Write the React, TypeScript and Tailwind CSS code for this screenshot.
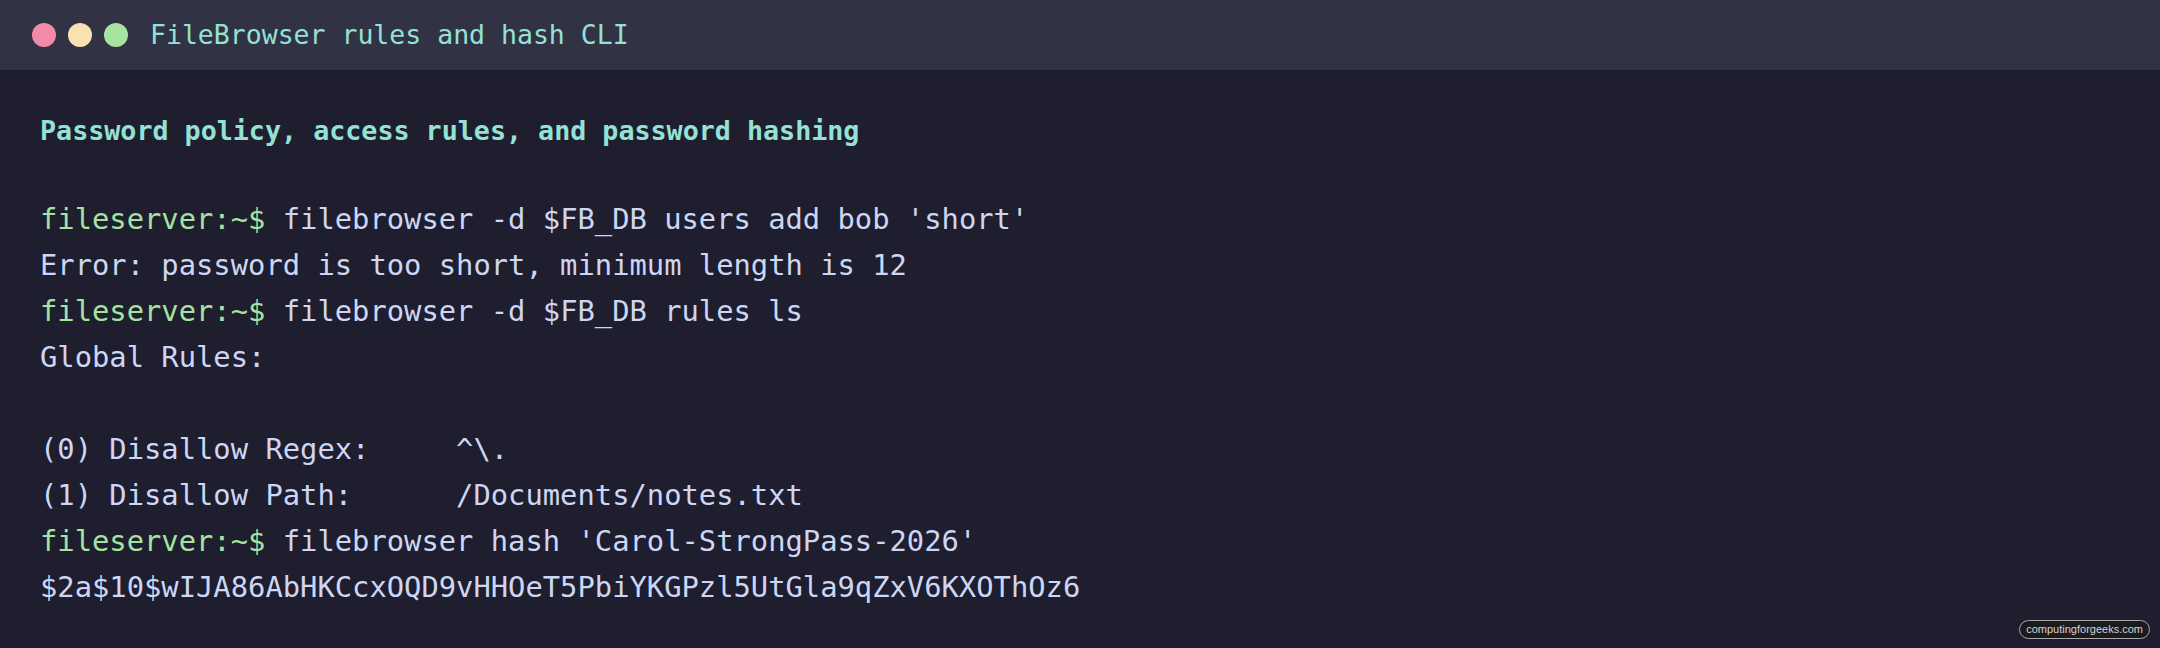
const mono = "font-['DejaVu_Sans_Mono','Liberation_Mono',monospace]"

interface LineType {
    prompt?: boolean
    text: string
}

const lines: LineType[] = [
    { prompt: true, text: "filebrowser -d $FB_DB users add bob 'short'" },
    { text: "Error: password is too short, minimum length is 12" },
    { prompt: true, text: "filebrowser -d $FB_DB rules ls" },
    { text: "Global Rules:" },
    { text: "" },
    { text: "(0) Disallow Regex:     ^\\." },
    { text: "(1) Disallow Path:      /Documents/notes.txt" },
    { prompt: true, text: "filebrowser hash 'Carol-StrongPass-2026'" },
    { text: "$2a$10$wIJA86AbHKCcxOQD9vHHOeT5PbiYKGPzl5UtGla9qZxV6KXOThOz6" },
]

export default function App() {
    return (
        <div className={`relative w-[2160px] h-[648px] bg-[#1e1e2e] overflow-hidden ${mono}`}>

            <header className="h-[70px] bg-[#313244] flex items-center pl-[32px]">
                <div className="flex gap-[12px]">
                    <span className="w-[24px] h-[24px] rounded-full bg-[#f38ba8]" />
                    <span className="w-[24px] h-[24px] rounded-full bg-[#f9e2af]" />
                    <span className="w-[24px] h-[24px] rounded-full bg-[#a6e3a1]" />
                </div>
                <h1 className="ml-[22px] text-[26.5px] leading-none text-[#94e2d5]">FileBrowser rules and hash CLI</h1>
            </header>

            <main className="pl-[40px] pt-[38px]">
                <h2 className="text-[26.7px] leading-[46px] font-bold text-[#94e2d5]">
                    Password policy, access rules, and password hashing
                </h2>

                <div className="mt-[42px] text-[28.8px] leading-[46px] text-[#cdd6f4]">
                    {lines.map((line, i) => (
                        <p key={i} className="whitespace-pre h-[46px]">
                            {line.prompt && <span className="text-[#a6e3a1]">fileserver:~$ </span>}
                            {line.text}
                        </p>
                    ))}
                </div>
            </main>

            <span className="absolute right-[10px] bottom-[9px] h-[19px] px-[6px] flex items-center rounded-full border border-[#a8a8a8] bg-[#1b1b1f] text-[11px] text-[#d4d4d4] font-['Liberation_Sans',Arial,sans-serif]">
                computingforgeeks.com
            </span>
        </div>
    )
}
